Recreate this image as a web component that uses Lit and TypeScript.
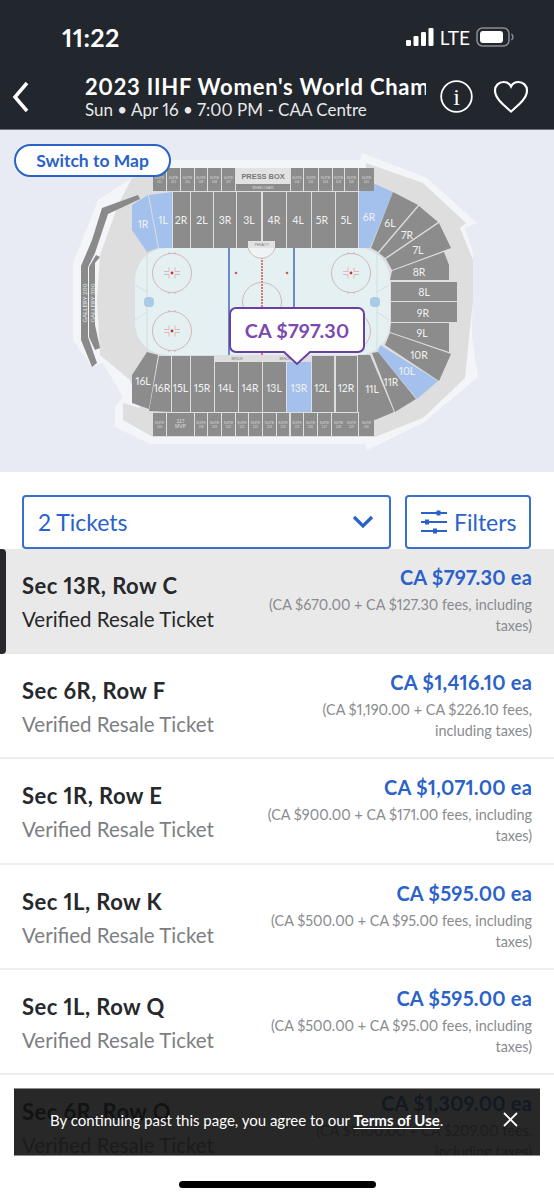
import { LitElement, html, css, svg } from "lit";
import { customElement } from "lit/decorators.js";

type Sec = { p: string; l: string; x: number; y: number; blue?: boolean };
const r = (a: number, b: number, c: number, d: number) => `${a},${c} ${b},${c} ${b},${d} ${a},${d}`;

const SECTIONS: Sec[] = [
  { p: "148,195 132,205 132,230 147,252 158,248", l: "1R", x: 143, y: 224, blue: true },
  { p: "149,195 172,192 172,248 159,248", l: "1L", x: 163, y: 220, blue: true },
  { p: r(173, 190, 192, 248), l: "2R", x: 181, y: 220 },
  { p: r(191, 213, 192, 248), l: "2L", x: 202, y: 220 },
  { p: r(214, 236, 192, 248), l: "3R", x: 225, y: 220 },
  { p: r(237, 261, 192, 248), l: "3L", x: 249, y: 220 },
  { p: r(263, 286, 192, 248), l: "4R", x: 274, y: 220 },
  { p: r(287, 311, 192, 248), l: "4L", x: 298, y: 220 },
  { p: r(312, 335, 192, 248), l: "5R", x: 322, y: 220 },
  { p: r(336, 358, 192, 248), l: "5L", x: 346, y: 220 },
  { p: "359,192 375,184 393,192 370,248 359,248", l: "6R", x: 369, y: 217, blue: true },
  { p: "393,192 418,205 378,252 371,248", l: "6L", x: 390, y: 223 },
  { p: "419,206 438,222 385,258 379,253", l: "7R", x: 407, y: 235 },
  { p: "439,223 451,248 392,270 386,259", l: "7L", x: 418, y: 250 },
  { p: "444,252 449,265 449,280 390,280 392,271", l: "8R", x: 419, y: 272 },
  { p: r(391, 457, 282, 301), l: "8L", x: 424, y: 292 },
  { p: r(391, 457, 302, 322), l: "9R", x: 423, y: 313 },
  { p: "391,323 449,323 449,352 390,332", l: "9L", x: 422, y: 333 },
  { p: "390,333 451,354 439,381 385,345", l: "10R", x: 419, y: 355 },
  { p: "380,345 438,381 417,399 378,352", l: "10L", x: 407, y: 371, blue: true },
  { p: "372,353 378,352 416,399 395,412", l: "11R", x: 391, y: 382 },
  { p: "358,355 370,355 394,412 375,420 358,412", l: "11L", x: 372, y: 389 },
  { p: r(336, 357, 356, 412), l: "12R", x: 346, y: 388 },
  { p: r(312, 334, 356, 412), l: "12L", x: 322, y: 388 },
  { p: r(287, 311, 362, 412), l: "13R", x: 299, y: 388, blue: true },
  { p: r(263, 286, 362, 412), l: "13L", x: 274, y: 388 },
  { p: r(239, 262, 362, 412), l: "14R", x: 250, y: 388 },
  { p: r(215, 238, 362, 412), l: "14L", x: 226, y: 388 },
  { p: r(191, 214, 356, 412), l: "15R", x: 202, y: 388 },
  { p: r(172, 190, 356, 412), l: "15L", x: 180.5, y: 388 },
  { p: "159,356 171,356 171,412 149,411", l: "16R", x: 162, y: 388 },
  { p: "147,352 158,355 149,409 132,403 132,375", l: "16L", x: 143, y: 381 },
];

type Suite = { a: number; b: number; t: string };
const TOP: Suite[] = [
  [153, 166, "112"], [167, 180, "111"], [181, 194, "110"], [195, 207, "109"], [208, 221, "108"], [222, 235, "107"],
  [291, 303, "106"], [304, 318, "105"], [319, 332, "104"], [333, 344, "103"], [345, 358, "102"], [359, 374, "101"],
].map(([a, b, t]) => ({ a, b, t })) as Suite[];
const BOTTOM: Suite[] = [
  [153, 166, "116"], [195, 207, "118"], [208, 221, "119"], [222, 235, "120"], [236, 248, "121"], [249, 262, "122"],
  [263, 276, "123"], [277, 289, "124"], [291, 303, "125"], [304, 317, "126"], [318, 331, "127"], [332, 345, "128"],
  [345, 358, "129"], [359, 374, "130"],
].map(([a, b, t]) => ({ a, b, t })) as Suite[];

const TICKETS = [
  ["Sec 13R, Row C", "CA $797.30 ea", "(CA $670.00 + CA $127.30 fees, including taxes)"],
  ["Sec 6R, Row F", "CA $1,416.10 ea", "(CA $1,190.00 + CA $226.10 fees, including taxes)"],
  ["Sec 1R, Row E", "CA $1,071.00 ea", "(CA $900.00 + CA $171.00 fees, including taxes)"],
  ["Sec 1L, Row K", "CA $595.00 ea", "(CA $500.00 + CA $95.00 fees, including taxes)"],
  ["Sec 1L, Row Q", "CA $595.00 ea", "(CA $500.00 + CA $95.00 fees, including taxes)"],
  ["Sec 6R, Row Q", "CA $1,309.00 ea", "(CA $1,100.00 + CA $209.00 fees, including taxes)"],
];

@customElement("app-root")
export class AppRoot extends LitElement {
  static styles = css`
    :host {
      display: flex;
      flex-direction: column;
      position: relative;
      width: 554px;
      height: 1200px;
      overflow: hidden;
      background: #fff;
      font-family: "Lato", "Liberation Sans", sans-serif;
      font-variant-numeric: proportional-nums;
      color: #26282b;
    }
    .top { background: #22262d; color: #fff; height: 130px; box-sizing: border-box; flex: none; border-bottom: 1px solid #70747a; display: flex; flex-direction: column; }
    .status { height: 71px; box-sizing: border-box; display: flex; align-items: center; padding: 3px 40px 0 62px; justify-content: space-between; }
    .time { font-size: 25px; font-weight: 700; letter-spacing: 0.4px; }
    .sig { display: flex; align-items: center; gap: 6px; font-size: 19px; }
    .nav { display: flex; align-items: flex-start; padding: 0 26px 0 12px; }
    .back { margin-top: 10px; flex: none; }
    .titles { margin: 2px 0 0 56px; width: 341px; flex: none; }
    .t1 { font-size: 22px; font-weight: 700; line-height: 27px; white-space: nowrap; overflow: hidden; letter-spacing: 0.75px; }
    .t2 { font-size: 17px; line-height: 20px; white-space: nowrap; color: #e8e9ea; }
    .info { margin: 9px 0 0 14px; flex: none; }
    .heart { margin: 9px 0 0 20px; flex: none; }
    .map { position: relative; height: 342px; flex: none; background: #e8ebf3; }
    .map svg { display: block; }
    .switch {
      position: absolute; left: 14px; top: 14px; width: 157px; height: 33px; box-sizing: border-box;
      border: 2px solid #2a62c9; border-radius: 17px; background: #fff; color: #2a62c9;
      font-size: 17.5px; font-weight: 700; display: flex; align-items: center; justify-content: center;
    }
    .controls { display: flex; gap: 14px; padding: 23px 23px 0 22px; flex: none; }
    .ctl {
      box-sizing: border-box; height: 54px; border: 2px solid #3b6fce; border-radius: 4px;
      color: #2a62c9; font-size: 23px; display: flex; align-items: center; flex: none;
    }
    .select { width: 369px; padding: 0 15px 0 14px; justify-content: space-between; }
    .filters { width: 126px; padding-left: 14px; gap: 7px; }
    .list { flex: 1; min-height: 0; overflow: hidden; margin-bottom: 44px; }
    .row {
      box-sizing: border-box; height: 105.2px; padding: 18px 22px 0 22px; border-bottom: 2px solid #eeeeee;
      display: flex; justify-content: space-between; position: relative;
    }
    .row.sel { background: #e9e9e9; border-bottom: 0; }
    .row.sel::before {
      content: ""; position: absolute; left: 0; top: 0; bottom: 0; width: 6px;
      background: #26282b; border-radius: 0 4px 4px 0;
    }
    .left { padding-top: 6px; }
    .sec { font-size: 22px; font-weight: 700; line-height: 26px; white-space: nowrap; letter-spacing: 0.45px; }
    .kind { font-size: 20.5px; line-height: 26px; margin-top: 7px; color: #7c7e82; white-space: nowrap; }
    .sel .kind { color: #26282b; }
    .right { text-align: right; width: 268px; flex: none; margin-top: -2px; }
    .price { font-size: 20px; font-weight: 700; color: #2a62c9; line-height: 24px; letter-spacing: 0.2px; }
    .fee { font-size: 14.4px; color: #8a8b8e; line-height: 21px; margin-top: 5px; }
    .toast {
      position: absolute; left: 14px; top: 1088px; width: 526px; height: 68px; box-sizing: border-box;
      background: rgba(17, 17, 17, 0.9); color: #fff; font-size: 15px;
      display: flex; align-items: center; padding: 0 0 4px 36px;
      border-top: 1px solid #8c8c8c; border-bottom: 1px solid #8c8c8c;
    }
    .toast b { font-weight: 700; text-decoration: underline; text-underline-offset: 2px; }
    .close { position: absolute; left: 489px; top: 23px; }
    .home { position: absolute; left: 179px; top: 1181px; width: 197px; height: 7px; border-radius: 4px; background: #000; }
    .lab { font-family: "Lato", "Liberation Sans", sans-serif; fill: #f1f1f1; font-size: 10.5px; text-anchor: middle; }
    .gal { font-family: "Lato", "Liberation Sans", sans-serif; fill: #e4e4e4; font-size: 6.2px; text-anchor: middle; }
    .suite { font-family: "Liberation Sans", sans-serif; fill: #dcdcdc; font-size: 3.2px; text-anchor: middle; }
    .dim { fill: #777; }
    .mvp { font-size: 5px; }
  `;

  private suite(s: Suite, y0: number, y1: number) {
    const mx = (s.a + s.b) / 2;
    const my = (y0 + y1) / 2;
    return svg`<rect x=${s.a} y=${y0} width=${s.b - s.a} height=${y1 - y0} fill="#8c8c8c"/>
      <text class="suite" x=${mx} y=${my - 0.5}>SUITE</text>
      <text class="suite" x=${mx} y=${my + 3.2}>${s.t}</text>`;
  }

  private faceoff(x: number, y: number) {
    return svg`
      <circle cx=${x} cy=${y} r="19.5" fill="none" stroke="#c9a9ad" stroke-width="0.8"/>
      <path d="M${x - 8} ${y - 1.5}h5v-4M${x + 8} ${y - 1.5}h-5v-4M${x - 8} ${y + 1.5}h5v4M${x + 8} ${y + 1.5}h-5v4" fill="none" stroke="#dba9ab" stroke-width="0.8"/>
      <path d="M${x - 3} ${y - 21}v2M${x + 3} ${y - 21}v2M${x - 3} ${y + 19}v2M${x + 3} ${y + 19}v2" stroke="#c9a9ad" stroke-width="0.8"/>
      <circle cx=${x} cy=${y} r="1.4" fill="#c2343c"/>`;
  }

  private mapSvg() {
    return html`<svg width="554" height="342" viewBox="0 130 554 342" xmlns="http://www.w3.org/2000/svg">
      <polygon fill="#f3f5f8" points="150,160 360,160 362,153 427,178 477,223 465,228 473,253 472,337 478,377 423,423 367,450 365,444 150,444 115,427 115,407 123,397 103,363 92,367 73,340 73,263 98,200 132,178"/>
      <polygon fill="#dedede" points="132,178 153,172 153,168 366,168 366,163 423,183 466,223 460,228 473,260 473,300 465,378 423,418 375,437 153,437 123,420 123,403 140,408 130,380 100,355 97,300 100,255 118,205"/>
      <polygon fill="#8a8a8a" points="138,195 102,208 92,240 81,266 81,340 92,367 97,363 88,337 88,267 95,253 108,214 140,199"/>
      <polygon fill="#8a8a8a" points="100,257 96,255 89,267 89,337 95,350 100,348 95,325 95,263"/>
      <text class="gal" transform="translate(86.500,303) rotate(-90)">GALLERY 200</text>
      <text class="gal" transform="translate(94.500,303) rotate(-90)">GALLERY 300</text>

      <rect x="135" y="248" width="255" height="107" rx="32" fill="#e5f0f2"/>
      <path d="M147 252V353M377 252V353" stroke="#d0d6d8" stroke-width="0.8"/>
      <path d="M135 285L147 292M147 312L135 320M389 285L377 292M377 312L389 320" stroke="#d0d6d8" stroke-width="0.8"/>
      <path d="M229 248V355M294 248V355" stroke="#5f7ec4" stroke-width="1.8"/>
      <path d="M262 248V355" stroke="#cf5a5e" stroke-width="1.6" stroke-dasharray="2 1"/>
      <circle cx="262" cy="302" r="19.5" fill="none" stroke="#c9a9ad" stroke-width="0.8"/>
      <path d="M248 248a14 14 0 0 0 27 0" fill="#eef4f5" stroke="#c9a9ad" stroke-width="0.8"/>
      ${this.faceoff(172, 273)}${this.faceoff(172, 331)}${this.faceoff(351, 273)}${this.faceoff(351, 331)}
      <circle cx="236" cy="273" r="1.3" fill="#cf5a5e"/><circle cx="287" cy="273" r="1.3" fill="#cf5a5e"/>
      <circle cx="236" cy="331" r="1.3" fill="#cf5a5e"/><circle cx="287" cy="331" r="1.3" fill="#cf5a5e"/>
      <rect x="144" y="297" width="10" height="10" rx="4" fill="#a9cbe6"/>
      <rect x="370" y="297" width="10" height="10" rx="4" fill="#a9cbe6"/>

      <rect x="215" y="355" width="72" height="7" fill="#dedede"/>
      <text class="suite dim" x="237" y="360">BENCH</text>
      <text class="suite dim" x="285" y="360">BENCH</text>

      ${SECTIONS.map(
        (s) => svg`<polygon points=${s.p} fill=${s.blue ? "#a3c1ec" : "#8c8c8c"}/>
        <text class="lab" x=${s.x} y=${s.y + 4}>${s.l}</text>`
      )}
      <rect x="248" y="241" width="27" height="7" fill="#e2e2e2"/>
      <text class="suite dim" x="262" y="246">PENALTY</text>

      ${TOP.map((s) => this.suite(s, 168, 191))}
      <rect x="236" y="168" width="54" height="16" fill="#e2e2e2"/>
      <rect x="236" y="184" width="54" height="7" fill="#8c8c8c"/>
      <text x="263" y="179" text-anchor="middle" font-family="Liberation Sans, sans-serif" font-weight="700" font-size="7.400" fill="#777">PRESS BOX</text>
      <text class="suite" x="263" y="189">WHEELCHAIR</text>

      ${BOTTOM.map((s) => this.suite(s, 413, 436))}
      <rect x="167" y="413" width="27" height="23" fill="#8c8c8c"/>
      <text class="suite mvp" x="180.500" y="423">117</text>
      <text class="suite mvp" x="180.500" y="428">MVP</text>

      <path d="M236 308H358a6 6 0 0 1 6 6V346a6 6 0 0 1-6 6H310L297 364L284 352H236a6 6 0 0 1-6-6V314a6 6 0 0 1 6-6Z" fill="#fff" stroke="#6b3fa0" stroke-width="2"/>
      <text x="297" y="338" text-anchor="middle" font-family="Lato, sans-serif" font-weight="700" font-size="19.800" letter-spacing="0.2" fill="#7a4ab0">CA $797.30</text>
    </svg>`;
  }

  render() {
    return html`
      <div class="top">
        <div class="status">
          <div class="time">11:22</div>
          <div class="sig">
            <svg width="28" height="18" viewBox="0 0 28 18"><g fill="#fff"><rect x="0" y="12" width="5" height="6" rx="1.200"/><rect x="7.500" y="8" width="5" height="10" rx="1.200"/><rect x="15" y="4" width="5" height="14" rx="1.200"/><rect x="22.500" y="0" width="5" height="18" rx="1.200"/></g></svg>
            <span>LTE</span>
            <svg width="38" height="20" viewBox="0 0 38 20"><rect x="1" y="1" width="32" height="18" rx="5.500" fill="none" stroke="#8a8d92" stroke-width="1.500"/><rect x="4" y="4" width="23" height="12" rx="3" fill="#fff"/><path d="M35.500 7a4 4 0 0 1 0 6" fill="none" stroke="#8a8d92" stroke-width="1.500"/></svg>
          </div>
        </div>
        <div class="nav">
          <svg class="back" width="17" height="32" viewBox="0 0 17 32"><path d="M15 2L3 16L15 30" fill="none" stroke="#fff" stroke-width="3.500"/></svg>
          <div class="titles">
            <div class="t1">2023 IIHF Women's World Championship</div>
            <div class="t2">Sun • Apr 16 • 7:00 PM - CAA Centre</div>
          </div>
          <svg class="info" width="33" height="33" viewBox="0 0 33 33"><circle cx="16.500" cy="16.500" r="15.300" fill="none" stroke="#fff" stroke-width="1.800"/><text x="16.500" y="25" text-anchor="middle" font-family="Liberation Serif, serif" font-size="24" fill="#fff">i</text></svg>
          <svg class="heart" width="36" height="34" viewBox="0 0 36 34"><path d="M18 31.500C12 26 2 19 2 10.500C2 5.500 6 2 10.500 2C13.500 2 16.500 3.500 18 6.500C19.500 3.500 22.500 2 25.500 2C30 2 34 5.500 34 10.500C34 19 24 26 18 31.500Z" fill="none" stroke="#fff" stroke-width="2.200"/></svg>
        </div>
      </div>
      <div class="map">
        ${this.mapSvg()}
        <div class="switch">Switch to Map</div>
      </div>
      <div class="controls">
        <div class="ctl select">
          <span>2 Tickets</span>
          <svg width="22" height="14" viewBox="0 0 22 14"><path d="M2 2L11 11L20 2" fill="none" stroke="#2a62c9" stroke-width="3.200"/></svg>
        </div>
        <div class="ctl filters">
          <svg width="26" height="26" viewBox="0 0 26 26"><g stroke="#2a62c9" stroke-width="2" fill="#2a62c9"><path d="M0 4H26M0 13H26M0 22H26"/><path d="M17.500 1.500v5M6 10.500v5M14 19.500v5" stroke-width="4"/></g></svg>
          <span>Filters</span>
        </div>
      </div>
      <div class="list">
        ${TICKETS.map(
          (t, i) => html`<div class="row ${i === 0 ? "sel" : ""}">
            <div class="left"><div class="sec">${t[0]}</div><div class="kind">Verified Resale Ticket</div></div>
            <div class="right"><div class="price">${t[1]}</div><div class="fee">${t[2]}</div></div>
          </div>`
        )}
      </div>
      <div class="toast">
        <span>By continuing past this page, you agree to our <b>Terms of Use</b>.</span>
        <svg class="close" width="15" height="15" viewBox="0 0 15 15"><path d="M1 1L14 14M14 1L1 14" stroke="#fff" stroke-width="1.800"/></svg>
      </div>
      <div class="home"></div>
    `;
  }
}
